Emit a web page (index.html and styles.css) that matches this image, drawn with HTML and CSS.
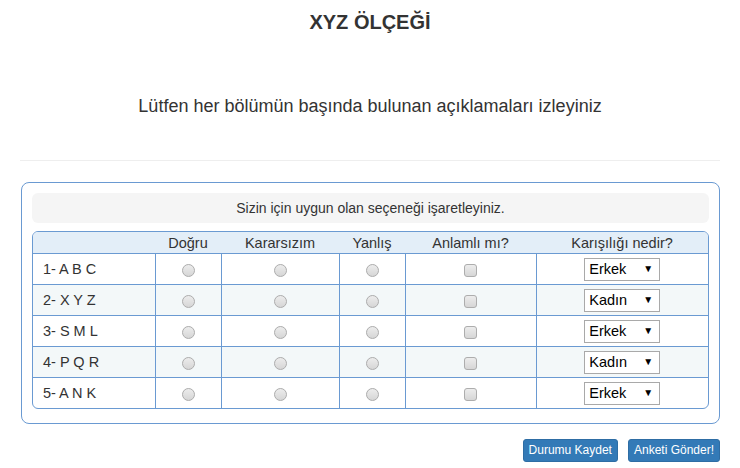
FILE: index.html
```html
<!DOCTYPE html>
<html lang="tr">
<head>
    <meta charset="UTF-8">
    <meta name="viewport" content="width=device-width, initial-scale=1.0">
    <title>XYZ Ölçeği</title>
    <link rel="stylesheet" href="styles.css">
</head>
<body>

    <div class="page">
        <h1 class="title">XYZ ÖLÇEĞİ</h1>
        <p class="intro">Lütfen her bölümün başında bulunan açıklamaları izleyiniz</p>
        <hr class="divider">

        <!-- anket paneli -->
        <div class="panel">
            <div class="notice">Sizin için uygun olan seçeneği işaretleyiniz.</div>

            <div class="table-wrap">
                <table class="survey">
                    <colgroup>
                        <col style="width:122px">
                        <col style="width:66px">
                        <col style="width:118px">
                        <col style="width:66px">
                        <col style="width:131px">
                        <col>
                    </colgroup>
                    <thead>
                        <tr>
                            <th></th>
                            <th>Doğru</th>
                            <th>Kararsızım</th>
                            <th>Yanlış</th>
                            <th>Anlamlı mı?</th>
                            <th>Karışılığı nedir?</th>
                        </tr>
                    </thead>
                    <tbody>
                        <tr>
                            <td class="item">1- A B C</td>
                            <td><input type="radio" name="q1"></td>
                            <td><input type="radio" name="q1"></td>
                            <td><input type="radio" name="q1"></td>
                            <td><input type="checkbox"></td>
                            <td><span class="select-box"><select><option>Erkek</option><option>Kadın</option></select></span></td>
                        </tr>
                        <tr>
                            <td class="item">2- X Y Z</td>
                            <td><input type="radio" name="q2"></td>
                            <td><input type="radio" name="q2"></td>
                            <td><input type="radio" name="q2"></td>
                            <td><input type="checkbox"></td>
                            <td><span class="select-box"><select><option>Kadın</option><option>Erkek</option></select></span></td>
                        </tr>
                        <tr>
                            <td class="item">3- S M L</td>
                            <td><input type="radio" name="q3"></td>
                            <td><input type="radio" name="q3"></td>
                            <td><input type="radio" name="q3"></td>
                            <td><input type="checkbox"></td>
                            <td><span class="select-box"><select><option>Erkek</option><option>Kadın</option></select></span></td>
                        </tr>
                        <tr>
                            <td class="item">4- P Q R</td>
                            <td><input type="radio" name="q4"></td>
                            <td><input type="radio" name="q4"></td>
                            <td><input type="radio" name="q4"></td>
                            <td><input type="checkbox"></td>
                            <td><span class="select-box"><select><option>Kadın</option><option>Erkek</option></select></span></td>
                        </tr>
                        <tr>
                            <td class="item">5- A N K</td>
                            <td><input type="radio" name="q5"></td>
                            <td><input type="radio" name="q5"></td>
                            <td><input type="radio" name="q5"></td>
                            <td><input type="checkbox"></td>
                            <td><span class="select-box"><select><option>Erkek</option><option>Kadın</option></select></span></td>
                        </tr>
                    </tbody>
                </table>
            </div>
        </div>

        <div class="actions">
            <button type="button" class="btn">Durumu Kaydet</button>
            <button type="button" class="btn">Anketi Gönder!</button>
        </div>
    </div>

</body>
</html>
```

FILE: styles.css
```css
body {
    font-family: 'Liberation Sans', Arial, sans-serif;
    margin: 0;
    padding: 0;
    background-color: #fff;
    color: #333;
}
.page {
    padding: 0 20px;
}
.title {
    margin: 12px 0 0;
    font-size: 20px;
    line-height: 20px;
    text-align: center;
    font-weight: bold;
}
.intro {
    margin: 64px 0 0;
    font-size: 18px;
    line-height: 20px;
    text-align: center;
}
.divider {
    margin: 44px 0 0;
    border: 0;
    border-top: 1px solid #eee;
}
.panel {
    margin: 21px 0 0 1px;
    padding: 10px 10px 14px;
    border: 1px solid #6a9ad2;
    border-radius: 8px;
}
.notice {
    background-color: #f5f5f5;
    border-radius: 6px;
    height: 30px;
    line-height: 30px;
    font-size: 14px;
    text-align: center;
}
.table-wrap {
    margin: 8px 0 0;
    border: 1px solid #6a9ad2;
    border-radius: 6px;
    overflow: hidden;
}
.survey {
    width: 100%;
    table-layout: fixed;
    border-collapse: collapse;
    font-size: 14.5px;
}
.survey th {
    background-color: #e3eef8;
    height: 21px;
    padding: 0;
    font-weight: normal;
    text-align: center;
}
.survey td {
    height: 30px;
    padding: 0;
    border-top: 1px solid #6a9ad2;
    border-left: 1px solid #6a9ad2;
    text-align: center;
    vertical-align: middle;
}
.survey td.item {
    border-left: 0;
    text-align: left;
    padding-left: 10px;
}
.survey tbody tr:nth-child(even) td {
    background-color: #f3f8f9;
}
.survey input[type="radio"], .survey input[type="checkbox"] {
    -webkit-appearance: none;
    appearance: none;
    width: 13px;
    height: 13px;
    margin: 0;
    vertical-align: middle;
    border: 1px solid #adadad;
    background: linear-gradient(#ececec, #d6d6d6);
}
.survey input[type="radio"] {
    border-radius: 50%;
}
.survey input[type="checkbox"] {
    border-radius: 3px;
}
.select-box {
    position: relative;
    display: inline-block;
    vertical-align: middle;
}
.select-box select {
    -webkit-appearance: none;
    appearance: none;
    width: 76px;
    height: 23px;
    padding: 0 0 0 4px;
    border: 1px solid #a9a9a9;
    background-color: #fff;
    color: #000;
    font-family: 'Liberation Sans', Arial, sans-serif;
    font-size: 14.5px;
}
.select-box::after {
    content: "▼";
    position: absolute;
    right: 7px;
    top: 5px;
    font-size: 10px;
    color: #000;
    pointer-events: none;
}
.actions {
    display: flex;
    justify-content: flex-end;
    gap: 10px;
    margin-top: 15px;
}
.btn {
    background-color: #337ab7;
    border: 1px solid #2e6da4;
    color: white;
    font-family: 'Liberation Sans', Arial, sans-serif;
    font-size: 12px;
    line-height: 17px;
    padding: 2px 5px;
    border-radius: 3px;
    cursor: pointer;
}
.btn:hover {
    background-color: #286090;
}
```
